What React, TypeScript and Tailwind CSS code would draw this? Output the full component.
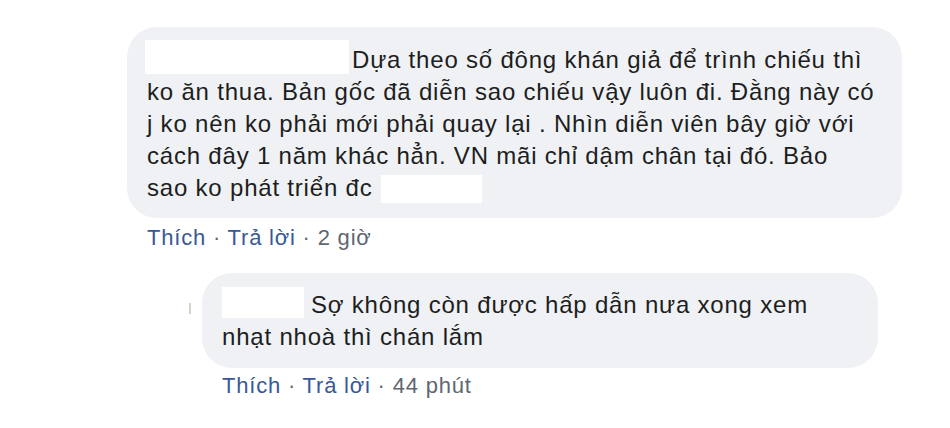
const font = { fontFamily: '"Liberation Sans", Arial, sans-serif' };

function Actions({ time }: { time: string }) {
  return (
    <div className="text-[22px] leading-[28px] tracking-[0.8px] whitespace-nowrap text-[#385898]">
      <span>Thích</span>
      <span className="text-[#606770]"> · </span>
      <span>Trả lời</span>
      <span className="text-[#606770]"> · {time}</span>
    </div>
  );
}

export default function App() {
  return (
    <div className="w-[950px] h-[428px] bg-white overflow-hidden" style={font}>
      <div className="pt-[27px] pl-[127px]">
        <div className="w-[775px] rounded-[30px] bg-[#f0f1f4] pl-[20px] pr-[10px] pt-[17px] pb-[14px] text-[24px] leading-[32px] tracking-[0.8px] whitespace-nowrap text-[#1c1e21]">
          <span className="inline-block w-[204px] h-[34px] bg-white align-[-6px] -ml-[2px] mr-[3px] -mt-[6px]" />
          Dựa theo số đông khán giả để trình chiếu thì
          <br />
          ko ăn thua. Bản gốc đã diễn sao chiếu vậy luôn đi. Đằng này có
          <br />
          j ko nên ko phải mới phải quay lại . Nhìn diễn viên bây giờ với
          <br />
          cách đây 1 năm khác hẳn. VN mãi chỉ dậm chân tại đó. Bảo
          <br />
          sao ko phát triển đc{' '}
          <span className="inline-block w-[101px] h-[28px] bg-white align-[-7px] ml-[1px]" />
        </div>
        <div className="mt-[6px] pl-[20px]">
          <Actions time="2 giờ" />
        </div>

        <div className="mt-[21px] flex items-start">
          <div className="w-[75px] pt-[30px] flex justify-end pr-[11px]">
            <div className="w-[2px] h-[11px] bg-[#d6d3cc]" />
          </div>
          <div>
            <div className="w-[676px] rounded-[30px] bg-[#f0f1f4] pl-[20px] pr-[10px] pt-[16px] pb-[15px] text-[24px] leading-[32px] tracking-[0.8px] whitespace-nowrap text-[#1c1e21]">
              <span className="inline-block w-[82px] h-[31px] bg-white align-[-5px] mr-[7px] -mt-[4px]" />
              Sợ không còn được hấp dẫn nưa xong xem
              <br />
              nhạt nhoà thì chán lắm
            </div>
            <div className="mt-[4px] pl-[20px]">
              <Actions time="44 phút" />
            </div>
          </div>
        </div>
      </div>
    </div>
  );
}
